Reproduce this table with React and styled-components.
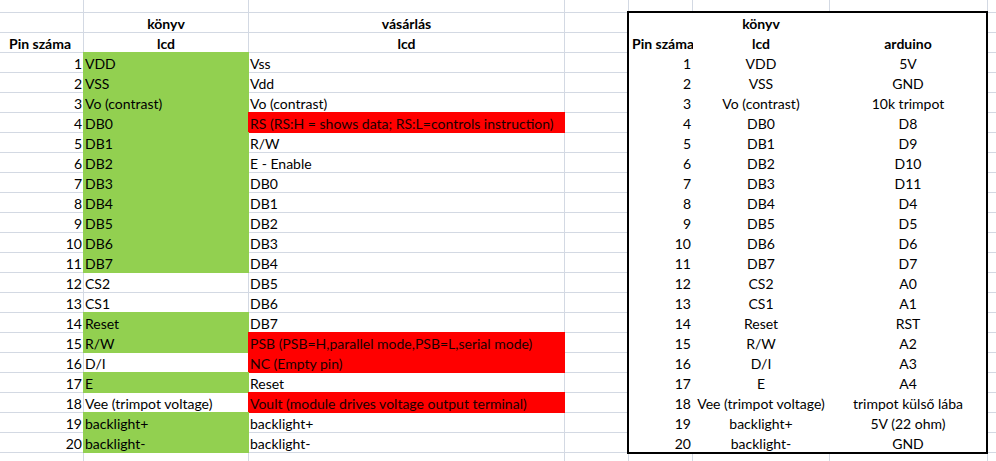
import React from 'react';
import styled, { createGlobalStyle } from 'styled-components';

const GRIDLINE = '#d3d9e3';
const GREEN = '#92d050';
const RED = '#ff0000';

const Global = createGlobalStyle`
  html, body { margin: 0; padding: 0; background: #fff; overflow: hidden; }
  body { font-family: "Lato", "Open Sans", sans-serif; color: #000; }
`;

const Sheet = styled.div`
  display: grid;
  grid-template-columns: 83px 164px 315px 63px 63px 136px 157px 8px;
  grid-template-rows: 12px repeat(22, 19px) 8px;
  gap: 1px;
  width: 996px;
  height: 461px;
  overflow: hidden;
  background: ${GRIDLINE};
`;

const Cell = styled.div`
  background: ${(p) => p.$fill || '#fff'};
  margin: ${(p) => (p.$fill ? '-1px' : '0')};
  padding: ${(p) => (p.$fill ? 2 : 1)}px ${(p) => (p.$fill ? 2 : 1)}px 0
    ${(p) => (p.$indent || 0) + (p.$fill ? 2 : 1)}px;
  font-size: 14px;
  line-height: 19px;
  font-weight: ${(p) => (p.$bold ? 700 : 400)};
  text-align: ${(p) => p.$align || 'left'};
  color: ${(p) => (p.$fill === RED ? '#1a0000' : '#000')};
  white-space: nowrap;
  overflow: visible;
  min-width: 0;
`;

const BoxTable = styled.div`
  grid-column: 5 / 8;
  grid-row: 2 / 24;
  margin: -2px -1px -2px -2px;
  border: 2px solid #000;
  background: #fff;
  display: grid;
  grid-template-columns: 63px 136px 1fr;
  grid-template-rows: repeat(22, 19px);
  gap: 1px;
  z-index: 1;
`;

const rows = [
  { n: 1, book: 'VDD', buy: 'Vss', g: true, ard: '5V' },
  { n: 2, book: 'VSS', buy: 'Vdd', g: true, ard: 'GND' },
  { n: 3, book: 'Vo (contrast)', buy: 'Vo (contrast)', g: true, ard: '10k trimpot' },
  { n: 4, book: 'DB0', buy: 'RS (RS:H = shows data; RS:L=controls instruction)', g: true, r: true, ard: 'D8' },
  { n: 5, book: 'DB1', buy: 'R/W', g: true, ard: 'D9' },
  { n: 6, book: 'DB2', buy: 'E - Enable', g: true, ard: 'D10' },
  { n: 7, book: 'DB3', buy: 'DB0', g: true, ard: 'D11' },
  { n: 8, book: 'DB4', buy: 'DB1', g: true, ard: 'D4' },
  { n: 9, book: 'DB5', buy: 'DB2', g: true, ard: 'D5' },
  { n: 10, book: 'DB6', buy: 'DB3', g: true, ard: 'D6' },
  { n: 11, book: 'DB7', buy: 'DB4', g: true, ard: 'D7' },
  { n: 12, book: 'CS2', buy: 'DB5', ard: 'A0' },
  { n: 13, book: 'CS1', buy: 'DB6', ard: 'A1' },
  { n: 14, book: 'Reset', buy: 'DB7', g: true, ard: 'RST' },
  { n: 15, book: 'R/W', buy: 'PSB (PSB=H,parallel mode,PSB=L,serial mode)', g: true, r: true, ard: 'A2' },
  { n: 16, book: 'D/I', buy: 'NC (Empty pin)', r: true, ard: 'A3' },
  { n: 17, book: 'E', buy: 'Reset', g: true, ard: 'A4' },
  { n: 18, book: 'Vee (trimpot voltage)', buy: 'Voult (module drives voltage output terminal)', r: true, ard: 'trimpot külső lába' },
  { n: 19, book: 'backlight+', buy: 'backlight+', g: true, ard: '5V (22 ohm)' },
  { n: 20, book: 'backlight-', buy: 'backlight-', g: true, ard: 'GND' },
];

const emptyRow = (key) =>
  Array.from({ length: 8 }, (_, i) => <Cell key={`${key}-${i}`} />);

export default function App() {
  return (
    <>
      <Global />
      <Sheet>
        {emptyRow('top')}

        <Cell />
        <Cell $align="center" $bold>könyv</Cell>
        <Cell $align="center" $bold>vásárlás</Cell>
        <Cell />
        <Cell />

        <Cell $bold $indent={8}>Pin száma</Cell>
        <Cell $align="center" $bold>lcd</Cell>
        <Cell $align="center" $bold>lcd</Cell>
        <Cell />
        <Cell />

        {rows.map((row) => (
          <React.Fragment key={row.n}>
            <Cell $align="right">{row.n}</Cell>
            <Cell $fill={row.g ? GREEN : undefined}>{row.book}</Cell>
            <Cell $fill={row.r ? RED : undefined}>{row.buy}</Cell>
            <Cell />
            <Cell />
          </React.Fragment>
        ))}

        {emptyRow('bottom')}

        <BoxTable>
          <Cell />
          <Cell $align="center" $bold>könyv</Cell>
          <Cell />
          <Cell $bold $indent={2}>Pin száma</Cell>
          <Cell $align="center" $bold>lcd</Cell>
          <Cell $align="center" $bold>arduino</Cell>
          {rows.map((row) => (
            <React.Fragment key={`b${row.n}`}>
              <Cell $align="right">{row.n}</Cell>
              <Cell $align="center">{row.book}</Cell>
              <Cell $align="center">{row.ard}</Cell>
            </React.Fragment>
          ))}
        </BoxTable>
      </Sheet>
    </>
  );
}
